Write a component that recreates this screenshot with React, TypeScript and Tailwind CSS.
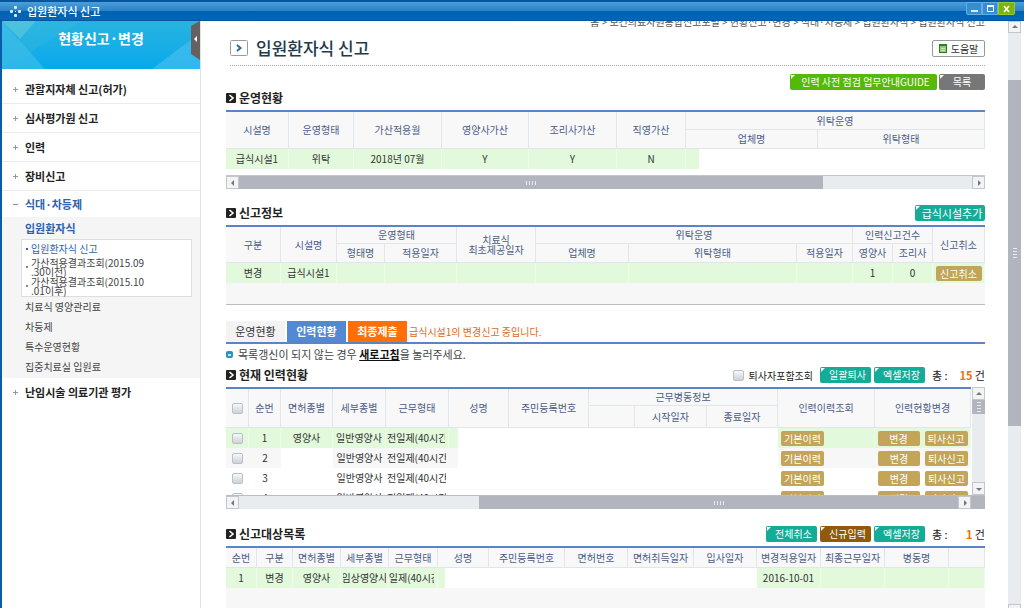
import type { ReactNode } from "react";

const TH = "border-r border-b border-[#e1e5ec] bg-[#f8f8f9] p-0 text-center font-normal text-[#4b5c86] overflow-hidden whitespace-nowrap";
const TD = "p-0 text-center overflow-hidden whitespace-nowrap";
const GREEN = "border-r border-[#eefbea] bg-[#e2f9dc]";
const TABLE = "w-full table-fixed border-separate border-spacing-0 border-t-2 border-[#5b84c4] text-[10px] leading-[12px] text-[#333]";

function Cols({ widths }: { widths: string[] }) {
  return (
    <colgroup>
      {widths.map((w, i) => (
        <col key={i} className={w} />
      ))}
    </colgroup>
  );
}

function Heading({ title, children }: { title: string; children?: ReactNode }) {
  return (
    <div className="mb-1 flex h-4 items-center justify-between">
      <h2 className="flex items-center gap-[3px] text-[12px] leading-4 font-bold text-[#222]">
        <svg width="10" height="10" viewBox="0 0 10 10" aria-hidden="true">
          <rect width="10" height="10" rx="1" fill="#222" />
          <path d="M3.5 2 L7 5 L3.5 8" fill="none" stroke="#fff" strokeWidth="1.6" />
        </svg>
        {title}
      </h2>
      {children}
    </div>
  );
}

function ActionButton({ className, children }: { className: string; children: ReactNode }) {
  return (
    <button type="button" className={`relative h-4 rounded-xs text-center leading-4 whitespace-nowrap text-white ${className}`}>
      <svg className="absolute top-px left-px" width="4" height="4" viewBox="0 0 4 4" aria-hidden="true">
        <path d="M0 0H4L0 4Z" fill="#fff" />
      </svg>
      {children}
    </button>
  );
}

function GoldButton({ className, children }: { className: string; children: ReactNode }) {
  return (
    <button type="button" className={`block h-[15px] rounded-xs bg-[#c2a558] text-center text-[10px] leading-[15px] whitespace-nowrap text-white ${className}`}>
      {children}
    </button>
  );
}

function Check({ label }: { label: string }) {
  return (
    <input
      type="checkbox"
      aria-label={label}
      className="block h-[11px] w-[11px] appearance-none rounded-xs border border-[#b9c0c8] bg-linear-to-b from-[#f6f7f8] to-[#cdd3d9] checked:bg-[#5b84c4]"
    />
  );
}

function Arrow({ dir, className }: { dir: "up" | "down" | "left" | "right"; className: string }) {
  const paths = { up: "M1 5L4 2L7 5Z", down: "M1 3L4 6L7 3Z", left: "M5 1L2 4L5 7Z", right: "M3 1L6 4L3 7Z" };
  const labels = { up: "위로", down: "아래로", left: "왼쪽으로", right: "오른쪽으로" };
  return (
    <button type="button" aria-label={labels[dir]} className={`flex shrink-0 items-center justify-center border border-[#c3c6cc] bg-[#f2f3f4] ${className}`}>
      <svg width="8" height="8" viewBox="0 0 8 8" aria-hidden="true">
        <path d={paths[dir]} fill="#777" />
      </svg>
    </button>
  );
}

function Grip({ vertical = false }: { vertical?: boolean }) {
  return (
    <svg width="12" height="12" viewBox="0 0 12 12" aria-hidden="true" className={vertical ? "rotate-90" : ""}>
      <path d="M1.5 4v4M4.5 4v4M7.5 4v4M10.5 4v4" stroke="#e9eaef" strokeWidth="1" />
    </svg>
  );
}

function MenuItem({ label, open = false }: { label: string; open?: boolean }) {
  return (
    <a href="#" className={`flex items-center gap-[6px] pl-[10px] text-[11px] font-bold ${open ? "h-[26px] text-[#2f62ad]" : "h-[29px] border-b border-[#ececec] text-[#222]"}`}>
      <svg width="7" height="7" viewBox="0 0 7 7" aria-hidden="true">
        <path d={open ? "M1 3.5H6" : "M1 3.5H6M3.5 1V6"} stroke={open ? "#7f8fa8" : "#999"} strokeWidth="1" />
      </svg>
      {label}
    </a>
  );
}

function Sidebar() {
  return (
    <aside className="w-[199px] shrink-0 border-r border-[#dfe1e4] bg-white">
      <div className="relative h-12 overflow-hidden bg-linear-to-b from-[#27b3df] to-[#03a9ec]">
        <svg className="absolute inset-0 h-full w-full" viewBox="0 0 198 48" preserveAspectRatio="none" aria-hidden="true">
          <path d="M0 0H34L18 18Z" fill="#5cc8e0" opacity=".7" />
          <path d="M0 0L43 48H0Z" fill="#46bfe9" opacity=".6" />
          <path d="M34 0L0 36V48L80 0Z" fill="#39bbe0" opacity=".35" />
          <path d="M150 48L198 12V48Z" fill="#45bdf0" opacity=".7" />
        </svg>
        <h2 className="relative pt-[7px] text-center text-[14px] leading-5 font-bold text-white">현황신고·변경</h2>
        <button type="button" aria-label="메뉴 접기" className="absolute top-0 right-0 h-[39px] w-[9px]">
          <svg width="9" height="39" viewBox="0 0 9 39" aria-hidden="true">
            <path d="M9 0L0 5V33L9 39Z" fill="#66605f" />
            <path d="M6 15L3 18L6 21Z" fill="#fff" />
          </svg>
        </button>
      </div>
      <nav className="pt-[6px]">
        <MenuItem label="관할지자체 신고(허가)" />
        <MenuItem label="심사평가원 신고" />
        <MenuItem label="인력" />
        <MenuItem label="장비신고" />
        <MenuItem label="식대·차등제" open />
        <div className="bg-[#f5f5f5] pt-[5px] pb-px text-[10px] text-[#444]">
          <a href="#" className="block h-[17px] pl-[23px] text-[11px] leading-[12px] font-bold text-[#2f62ad]">입원환자식</a>
          <ul className="mr-2 ml-[19px] flex h-[58px] flex-col gap-px border border-[#dedede] bg-white pl-1 leading-[9px] whitespace-nowrap">
            <li className="flex h-[17px] shrink-0 items-center gap-[3px] text-[#2f62ad]">
              <span className="h-[2px] w-[2px] bg-[#2f62ad]" />
              <a href="#" className="text-[10px]">입원환자식 신고</a>
            </li>
            <li className="flex h-[18px] shrink-0 items-center gap-[3px]">
              <span className="h-[2px] w-[2px] bg-[#888]" />
              <a href="#">가산적용결과조회(2015.09<br />.30이전)</a>
            </li>
            <li className="flex h-[18px] shrink-0 items-center gap-[3px]">
              <span className="h-[2px] w-[2px] bg-[#888]" />
              <a href="#">가산적용결과조회(2015.10<br />.01이후)</a>
            </li>
          </ul>
          {["치료식 영양관리료", "차등제", "특수운영현황", "집중치료실 입원료"].map((t) => (
            <a key={t} href="#" className="block h-5 pl-[23px] leading-5">{t}</a>
          ))}
        </div>
        <div className="[&>a]:border-0">
          <MenuItem label="난임시술 의료기관 평가" />
        </div>
      </nav>
    </aside>
  );
}

function OperationTable() {
  return (
    <section>
      <Heading title="운영현황" />
      <table className={TABLE}>
        <Cols widths={["w-[63px]", "w-[65px]", "w-[88px]", "w-[87px]", "w-[88px]", "w-[69px]", "w-[132px]", ""]} />
        <thead>
          <tr className="h-[18px]">
            {["시설명", "운영형태", "가산적용월", "영양사가산", "조리사가산", "직영가산"].map((t) => (
              <th key={t} rowSpan={2} className={TH}>{t}</th>
            ))}
            <th colSpan={2} className={TH}>위탁운영</th>
          </tr>
          <tr className="h-[19px]">
            <th className={TH}>업체명</th>
            <th className={TH}>위탁형태</th>
          </tr>
        </thead>
        <tbody>
          <tr className="h-5">
            {["급식시설1", "위탁", "2018년 07월", "Y", "Y", "N"].map((t, i) => (
              <td key={i} className={`${TD} ${GREEN}`}>{t}</td>
            ))}
            <td className="bg-[linear-gradient(to_right,#e2f9dc_13px,#fff_13px)] p-0" />
            <td className="p-0" />
          </tr>
        </tbody>
      </table>
      <div className="mt-[6px] flex h-[14px] border-t border-[#c3c6cc] bg-[#e8ecee]">
        <Arrow dir="left" className="w-[13px]" />
        <div className="flex w-[77%] items-center justify-center bg-[#b2b4be]"><Grip /></div>
        <div className="flex-1" />
        <Arrow dir="right" className="w-[13px]" />
      </div>
    </section>
  );
}

function ReportTable() {
  return (
    <section className="mt-4">
      <Heading title="신고정보">
        <ActionButton className="w-[70px] bg-[#14ac97] pl-1 text-[11px]">급식시설추가</ActionButton>
      </Heading>
      <table className={TABLE}>
        <Cols widths={["w-[55px]", "w-[56px]", "w-[48px]", "w-[72px]", "w-[79px]", "w-[93px]", "w-[168px]", "w-[56px]", "w-[40px]", "w-[40px]", ""]} />
        <thead>
          <tr className="h-[17px]">
            <th rowSpan={2} className={TH}>구분</th>
            <th rowSpan={2} className={TH}>시설명</th>
            <th colSpan={2} className={TH}>운영형태</th>
            <th rowSpan={2} className={`${TH} leading-[10px]`}>치료식<br />최초제공일자</th>
            <th colSpan={3} className={TH}>위탁운영</th>
            <th colSpan={2} className={TH}>인력신고건수</th>
            <th rowSpan={2} className={TH}>신고취소</th>
          </tr>
          <tr className="h-[19px]">
            {["형태명", "적용일자", "업체명", "위탁형태", "적용일자", "영양사", "조리사"].map((t, i) => (
              <th key={i} className={TH}>{t}</th>
            ))}
          </tr>
        </thead>
        <tbody>
          <tr className="h-5">
            {["변경", "급식시설1", "", "", "", "", "", "", "1", "0"].map((t, i) => (
              <td key={i} className={`${TD} ${GREEN}`}>{t}</td>
            ))}
            <td className={`${TD} ${GREEN}`}>
              <GoldButton className="mx-auto w-[46px]">신고취소</GoldButton>
            </td>
          </tr>
          <tr className="h-[22px]">
            <td colSpan={11} className="border-b border-[#b9bcc2] bg-[#f7f7f7] p-0" />
          </tr>
        </tbody>
      </table>
    </section>
  );
}

function StaffTable() {
  return (
    <section>
      <Heading title="현재 인력현황">
        <div className="flex items-center gap-[3px] text-[10px] text-[#222]">
          <label className="flex items-center gap-[5px] pr-1">
            <Check label="퇴사자포함조회" />
            퇴사자포함조회
          </label>
          <ActionButton className="w-[51px] bg-[#14ac97] pl-1">일괄퇴사</ActionButton>
          <ActionButton className="w-[51px] bg-[#14ac97] pl-1">엑셀저장</ActionButton>
          <Total count={15} />
        </div>
      </Heading>
      <div className="flex h-[108px]">
        <div className="min-w-0 flex-1 overflow-hidden">
          <table className={TABLE}>
            <Cols widths={["w-[23px]", "w-[32px]", "w-[52px]", "w-[53px]", "w-[63px]", "w-[60px]", "w-[80px]", "w-[46px]", "w-[72px]", "w-[71px]", "w-[97px]", ""]} />
            <thead>
              <tr className="h-[17px]">
                <th rowSpan={2} className={TH}><div className="flex justify-center"><Check label="전체 선택" /></div></th>
                {["순번", "면허종별", "세부종별", "근무형태", "성명", "주민등록번호"].map((t) => (
                  <th key={t} rowSpan={2} className={TH}>{t}</th>
                ))}
                <th colSpan={3} className={TH}>근무병동정보</th>
                <th rowSpan={2} className={TH}>인력이력조회</th>
                <th rowSpan={2} className={TH}>인력현황변경</th>
              </tr>
              <tr className="h-[22px]">
                <th className={TH} />
                <th className={TH}>시작일자</th>
                <th className={TH}>종료일자</th>
              </tr>
            </thead>
            <tbody>
              {[1, 2, 3, 4].map((n) => {
                const bg = n === 1 ? GREEN : n === 2 ? "bg-[#f7f7f7]" : "bg-white";
                return (
                  <tr key={n} className="h-5">
                    <td className={`${TD} ${bg}`}><div className="flex justify-center"><Check label={`${n}번 선택`} /></div></td>
                    <td className={`${TD} ${bg}`}>{n}</td>
                    <td className={`${TD} ${n === 1 ? GREEN : "bg-white"}`}>{n === 1 ? "영양사" : ""}</td>
                    <td className={`${TD} ${bg}`}>일반영양사</td>
                    <td className={`${TD} ${bg}`}><div className="mr-[3px] ml-px overflow-hidden text-left">전일제(40시간)</div></td>
                    <td className={n === 1 ? "bg-[linear-gradient(to_right,#e2f9dc_9px,#fff_9px)] p-0" : n === 2 ? "bg-[linear-gradient(to_right,#f7f7f7_9px,#fff_9px)] p-0" : "p-0"} />
                    <td className="p-0" colSpan={4} />
                    <td className={`${TD} ${bg}`}><GoldButton className="ml-[3px] w-[43px]">기본이력</GoldButton></td>
                    <td className={`${TD} ${bg}`}>
                      <div className="flex justify-center gap-[5px]">
                        <GoldButton className="w-[42px]">변경</GoldButton>
                        <GoldButton className="w-[43px]">퇴사신고</GoldButton>
                      </div>
                    </td>
                  </tr>
                );
              })}
            </tbody>
          </table>
        </div>
        <div className="ml-px flex w-[13px] flex-col bg-[#e8ecee]">
          <Arrow dir="up" className="h-[13px]" />
          <div className="flex h-[14px] items-center justify-center bg-[#b2b4be]"><Grip vertical /></div>
          <div className="flex-1" />
          <Arrow dir="down" className="h-[13px]" />
        </div>
      </div>
      <div className="flex h-[14px] border-t border-[#b9bcc2] bg-[#b2b4be]">
        <div className="flex w-1/3 bg-[#e8ecee]"><Arrow dir="left" className="w-[13px]" /></div>
        <div className="flex flex-1 items-center justify-center"><Grip /></div>
        <Arrow dir="right" className="mr-[14px] w-[13px]" />
      </div>
    </section>
  );
}

function Total({ count }: { count: number }) {
  return (
    <div className="ml-1 flex w-[53px] justify-between text-[11px] leading-4 whitespace-nowrap">
      <span>총 :</span>
      <span><b className="text-[#e8710f]">{count}</b> 건</span>
    </div>
  );
}

function TargetTable() {
  const heads = ["순번", "구분", "면허종별", "세부종별", "근무형태", "성명", "주민등록번호", "면허번호", "면허취득일자", "입사일자", "변경적용일자", "최종근무일자", "병동명", ""];
  return (
    <section className="mt-[17px]">
      <Heading title="신고대상목록">
        <div className="flex items-center gap-[3px] text-[10px] text-[#222]">
          <ActionButton className="w-[51px] bg-[#14ac97] pl-1">전체취소</ActionButton>
          <ActionButton className="w-[51px] bg-[#8f5a0c] pl-1">신규입력</ActionButton>
          <ActionButton className="w-[51px] bg-[#14ac97] pl-1">엑셀저장</ActionButton>
          <Total count={1} />
        </div>
      </Heading>
      <table className={TABLE}>
        <Cols widths={["w-[31px]", "w-[36px]", "w-[48px]", "w-[48px]", "w-[49px]", "w-[51px]", "w-[76px]", "w-[63px]", "w-[66px]", "w-[63px]", "w-[64px]", "w-[64px]", "w-[64px]", ""]} />
        <thead>
          <tr className="h-5">
            {heads.map((t, i) => (
              <th key={i} className={TH}>{t}</th>
            ))}
          </tr>
        </thead>
        <tbody>
          <tr className="h-5">
            <td className={`${TD} ${GREEN}`}>1</td>
            <td className={`${TD} ${GREEN}`}>변경</td>
            <td className={`${TD} ${GREEN}`}>영양사</td>
            <td className={`${TD} ${GREEN}`}><div className="mx-[2px] flex justify-center overflow-hidden">임상영양사</div></td>
            <td className={`${TD} ${GREEN}`}><div className="mr-[3px] flex justify-center overflow-hidden">전일제(40시간)</div></td>
            <td className="bg-[linear-gradient(to_right,#e2f9dc_7px,#fff_7px)] p-0" />
            <td colSpan={4} className="p-0" />
            <td className={`${TD} ${GREEN}`}>2016-10-01</td>
            <td className={GREEN} />
            <td className={GREEN} />
            <td className={GREEN} />
          </tr>
          <tr className="h-16">
            <td colSpan={14} className="bg-[#f7f7f7] p-0" />
          </tr>
        </tbody>
      </table>
    </section>
  );
}

export default function App() {
  return (
    <div className="flex h-screen flex-col overflow-hidden bg-white font-['Noto_Sans_CJK_KR',sans-serif] text-[10px]">
      <header className="z-10 flex h-[21px] shrink-0 items-center justify-between border-t-2 border-b border-t-[#07559d] border-b-[#07559d] bg-[linear-gradient(to_bottom,#4c9fd8_0%,#2b82c8_48%,#0061b0_52%,#0067b8_100%)] pr-[9px] pl-[10px]">
        <h1 className="flex items-center gap-[6px] text-[11px] leading-4 font-medium text-white">
          <svg width="11" height="11" viewBox="0 0 11 11" aria-hidden="true" fill="#d8f2f5">
            <rect x="4" y="0" width="3" height="3" rx="1" />
            <rect x="4" y="8" width="3" height="3" rx="1" />
            <rect x="0" y="4" width="3" height="3" rx="1" />
            <rect x="8" y="4" width="3" height="3" rx="1" />
            <rect x="5" y="5" width="1" height="1" />
          </svg>
          입원환자식 신고
        </h1>
        <div className="flex h-[13px] self-start">
          <button type="button" aria-label="최소화" className="w-4 rounded-bl-xs border border-[#5fb0e6] bg-[#348fd2]">
            <svg width="14" height="11" viewBox="0 0 14 11" aria-hidden="true"><path d="M4 8H11" stroke="#fff" strokeWidth="1.6" /></svg>
          </button>
          <button type="button" aria-label="최대화" className="w-4 border border-[#5fb0e6] bg-[#348fd2]">
            <svg width="14" height="11" viewBox="0 0 14 11" aria-hidden="true"><path d="M4.5 4V8.5H10.5V4" fill="none" stroke="#fff" strokeWidth="1" /><path d="M4 3H11" stroke="#fff" strokeWidth="2" /></svg>
          </button>
          <button type="button" aria-label="닫기" className="w-[17px] rounded-br-xs border border-[#9cc93a] bg-[#7db30c]">
            <svg width="15" height="11" viewBox="0 0 15 11" aria-hidden="true"><path d="M5 3L10 9M10 3L5 9" stroke="#fff" strokeWidth="1.6" /></svg>
          </button>
        </div>
      </header>

      <div className="flex min-h-0 flex-1 border-l-2 border-[#0a5ca8]">
        <Sidebar />
        <main className="min-w-0 flex-1 overflow-hidden pr-[23px] pl-[25px]">
          <div className="-mt-2 h-[18px] text-right text-[10px] leading-[18px] whitespace-nowrap text-[#555]">
            홈 &gt; 보건의료자원통합신고포털 &gt; 현황신고·변경 &gt; 식대·차등제 &gt; 입원환자식 &gt; 입원환자식 신고
          </div>
          <div className="ml-1 flex h-[35px] items-center justify-between border-b border-dotted border-[#aaa]">
            <h2 className="flex items-center gap-2 text-[17px] leading-5 font-medium text-[#1f3a4d]">
              <svg width="18" height="16" viewBox="0 0 18 16" aria-hidden="true">
                <rect x=".5" y=".5" width="17" height="15" rx="1" fill="#fff" stroke="#9b9b9b" />
                <path d="M7 5L10.5 8L7 11" fill="none" stroke="#2d6a98" strokeWidth="2" />
              </svg>
              입원환자식 신고
            </h2>
            <button type="button" className="flex h-[17px] w-[53px] items-center justify-center gap-1 rounded-xs border border-[#999] bg-white leading-[15px] text-[#333]">
              <svg width="8" height="9" viewBox="0 0 8 9" aria-hidden="true">
                <rect x=".5" y=".5" width="7" height="8" fill="#8fca72" stroke="#2f7d2a" />
                <path d="M1 1.5H7" stroke="#2f7d2a" />
                <path d="M2 4.5H6M2 6.5H6" stroke="#c9ebb8" />
              </svg>
              도움말
            </button>
          </div>
          <div className="mt-2 flex justify-end gap-[2px]">
            <ActionButton className="w-[147px] bg-[#55b90a] pl-1">인력 사전 점검 업무안내GUIDE</ActionButton>
            <ActionButton className="w-[46px] bg-[#777]">목록</ActionButton>
          </div>

          <OperationTable />
          <ReportTable />

          <div className="mt-4 flex h-[23px] items-stretch gap-[2px] border-b-2 border-[#5b84c4] text-[11px] leading-[21px]">
            <button type="button" className="w-[59px] bg-[#f3f3f3] text-[#333]">운영현황</button>
            <button type="button" className="w-[59px] bg-[#5389d3] font-bold text-white">인력현황</button>
            <button type="button" className="w-[59px] bg-[#ff6f06] font-bold text-white">최종제출</button>
            <span className="text-[10px] text-[#e06a1a]">급식시설1의 변경신고 중입니다.</span>
          </div>
          <p className="mb-[3px] flex h-5 items-center gap-[5px] text-[11px] leading-5 text-[#444]">
            <svg width="7" height="7" viewBox="0 0 7 7" aria-hidden="true">
              <rect width="7" height="7" rx="2" fill="#2b8fc0" />
              <rect x="2" y="3" width="3" height="2" fill="#bfe8f7" />
            </svg>
            <span>
              목록갱신이 되지 않는 경우 <a href="#" className="font-bold text-[#111] underline">새로고침</a>을 눌러주세요.
            </span>
          </p>

          <StaffTable />
          <TargetTable />
        </main>

        <div className="mr-[3px] flex w-[13px] shrink-0 flex-col bg-[#e8ecee]">
          <Arrow dir="up" className="h-3" />
          <div className="h-[8%]" />
          <div className="flex h-[59%] items-center justify-center bg-[#b2b4be]"><Grip vertical /></div>
          <div className="flex-1" />
          <div className="h-1 border border-b-0 border-[#c3c6cc] bg-[#f2f3f4]" />
        </div>
      </div>
    </div>
  );
}
